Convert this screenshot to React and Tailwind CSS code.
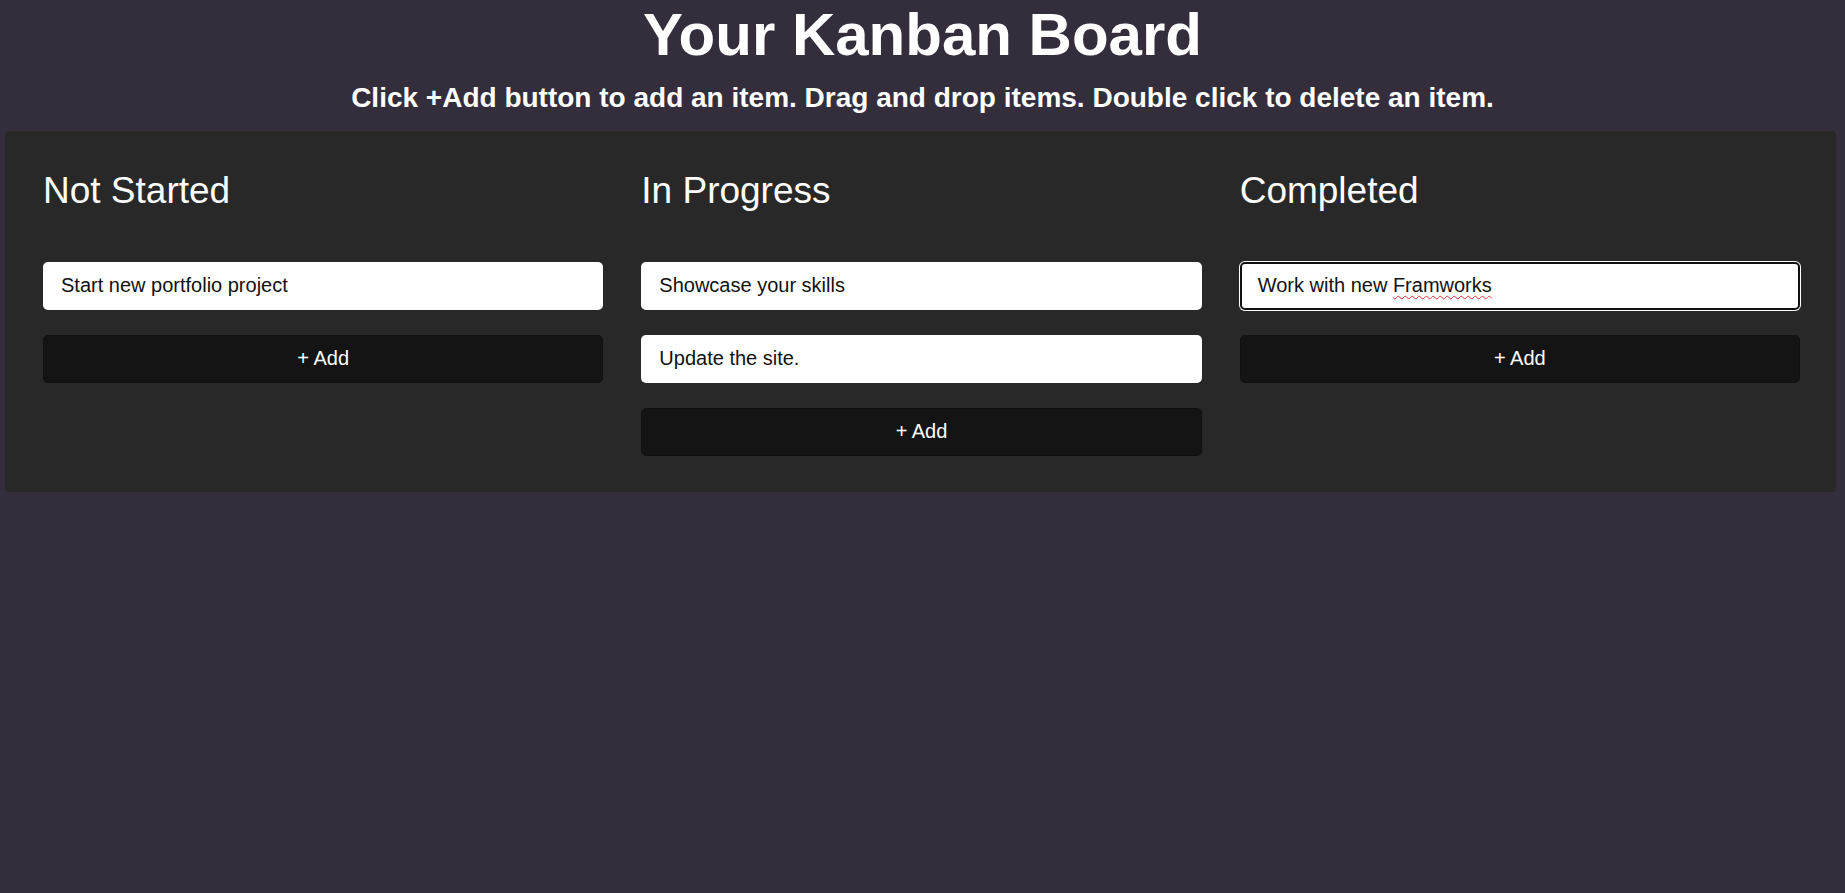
import React from "react";

const columns = [
  { title: "Not Started", items: ["Start new portfolio project"] },
  { title: "In Progress", items: ["Showcase your skills", "Update the site."] },
  { title: "Completed", items: ["__framworks__"] },
];

function Card({ text }) {
  if (text === "__framworks__") {
    return (
      <div className="h-[48px] rounded-[5px] bg-white pl-[18px] pt-[12px] text-[20px] leading-[23px] text-[#111] shadow-[0_0_0_1px_#ffffff,inset_0_0_0_2px_#101010]">
        Work with new{" "}
        <span className="underline decoration-wavy decoration-[#e0343a] decoration-1 underline-offset-[3px]">
          Framworks
        </span>
      </div>
    );
  }
  return (
    <div className="h-[48px] rounded-[5px] bg-white pl-[18px] pt-[12px] text-[20px] leading-[23px] text-[#111]">
      {text}
    </div>
  );
}

export default function App() {
  return (
    <div
      className="min-h-[893px] w-full bg-[#342d3b] text-white"
      style={{ fontFamily: '"Liberation Sans", Arial, sans-serif' }}
    >
      <h1 className="m-0 text-center text-[60px] font-bold leading-[69px]">
        Your Kanban Board
      </h1>
      <p className="mt-[13px] text-center text-[28px] font-bold leading-[32px]">
        Click +Add button to add an item. Drag and drop items. Double click to delete an item.
      </p>
      <div className="ml-[5px] mr-[9px] mt-[17px] flex gap-[38px] rounded-[4px] bg-[#282828] pb-[36px] pl-[38px] pr-[36px] pt-[39px]">
        {columns.map((col) => (
          <div key={col.title} className="flex min-w-0 flex-1 flex-col">
            <h2 className="text-[37px] font-normal leading-[42px] text-white">
              {col.title}
            </h2>
            <div className="mt-[50px] flex flex-col gap-[25px]">
              {col.items.map((it) => (
                <Card key={it} text={it} />
              ))}
              <button className="flex h-[48px] items-center justify-center rounded-[5px] border border-[#101010] bg-[#141414] pb-[3px] text-[20px] text-white">
                + Add
              </button>
            </div>
          </div>
        ))}
      </div>
    </div>
  );
}
